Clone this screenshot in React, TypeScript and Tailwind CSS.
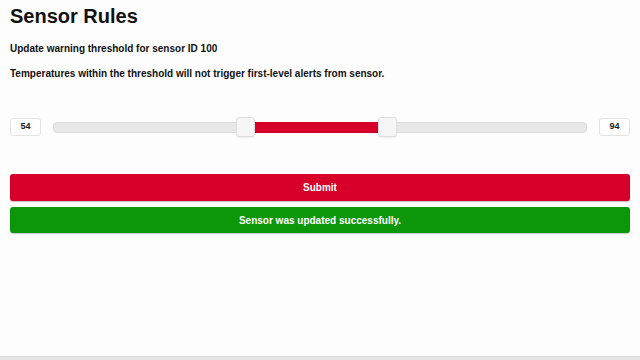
import React from "react";

const MIN = 0;
const MAX = 150;

function ValueBox({ value }: { value: number }) {
  return (
    <div className="w-[31px] h-[18px] shrink-0 flex items-center justify-center rounded-[3px] border border-[#e3e3e3] bg-white text-[9px] font-bold text-[#222]">
      {value}
    </div>
  );
}

function RangeSlider({ low, high }: { low: number; high: number }) {
  const lowPct = ((low - MIN) / (MAX - MIN)) * 100;
  const highPct = ((high - MIN) / (MAX - MIN)) * 100;

  return (
    <div className="relative flex-1 h-[20px] flex items-center">
      <div className="relative w-full h-[11px] rounded-[4px] border border-[#dcdcdc] bg-[#e8e8e8]">
        <div
          className="absolute top-[-1px] bottom-[-1px] bg-[#d7002a]"
          style={{ left: `${lowPct}%`, width: `${highPct - lowPct}%` }}
        />
      </div>
      <div
        className="absolute top-[0px] w-[19px] h-[20px] rounded-[3px] border border-[#dedede] bg-[#f6f6f6] shadow-[0_1px_1px_rgba(0,0,0,0.06)]"
        style={{ left: `calc(${lowPct}% - 9.5px)` }}
      />
      <div
        className="absolute top-[0px] w-[19px] h-[20px] rounded-[3px] border border-[#dedede] bg-[#f6f6f6] shadow-[0_1px_1px_rgba(0,0,0,0.06)]"
        style={{ left: `calc(${highPct}% - 9.5px)` }}
      />
    </div>
  );
}

export default function App() {
  const low = 54;
  const high = 94;

  return (
    <div
      className="h-screen flex flex-col bg-[#fdfdfd] text-[#111]"
      style={{ fontFamily: '"Liberation Sans", Arial, sans-serif' }}
    >
      <div className="flex-1 px-[10px]">
        <h1 className="pt-[6px] text-[20px] leading-[20px] font-bold">Sensor Rules</h1>
        <p className="mt-[16px] text-[10px] leading-[14px] font-bold">
          Update warning threshold for sensor ID 100
        </p>
        <p className="mt-[11px] text-[10px] leading-[14px] font-bold">
          Temperatures within the threshold will not trigger first-level alerts from sensor.
        </p>

        <div className="mt-[36px] flex items-center gap-[12px] h-[20px]">
          <ValueBox value={low} />
          <RangeSlider low={low} high={high} />
          <ValueBox value={high} />
        </div>

        <button className="mt-[37px] w-full h-[27px] rounded-[3px] bg-[#d7002a] text-white text-[10px] font-bold shadow-[0_1px_1px_rgba(0,0,0,0.25)]">
          Submit
        </button>
        <div className="mt-[6px] w-full h-[26px] rounded-[3px] bg-[#0c960a] text-white text-[10px] font-bold flex items-center justify-center shadow-[0_1px_1px_rgba(0,0,0,0.2)]">
          Sensor was updated successfully.
        </div>
      </div>
      <div className="h-[4px] bg-[#e6e6e6] border-t border-[#dadada]" />
    </div>
  );
}
